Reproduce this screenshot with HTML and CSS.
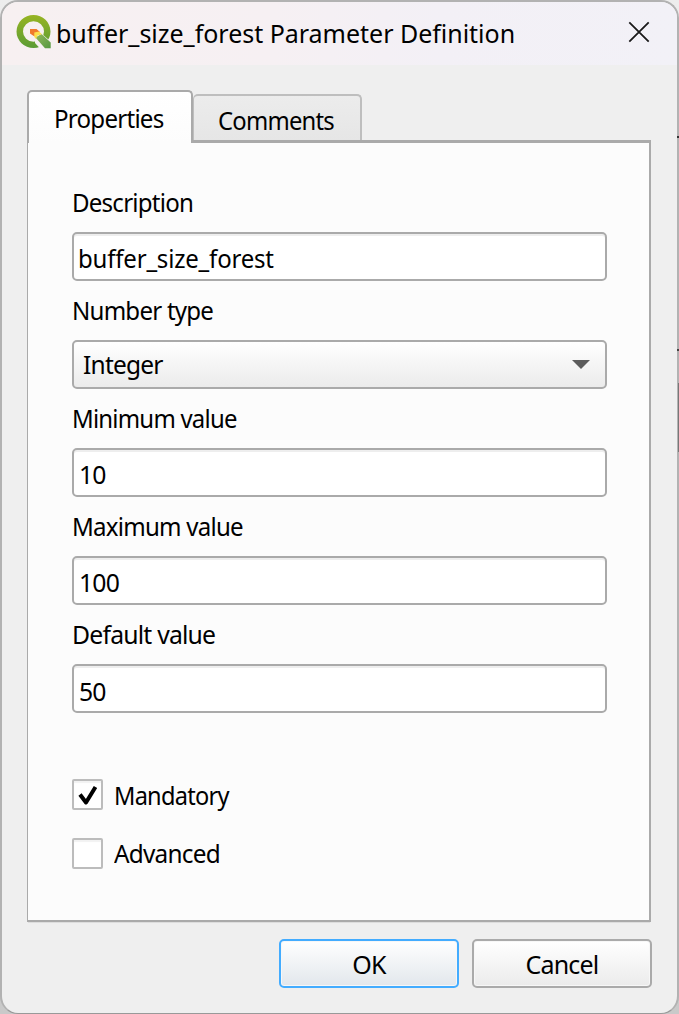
FILE: index.html
```html
<!DOCTYPE html>
<html lang="en">
<head>
<meta charset="utf-8">
<title>buffer_size_forest Parameter Definition</title>
<link rel="stylesheet" href="styles.css">
</head>
<body>
<div class="dialog">
  <header class="titlebar">
    <svg class="logo" width="36" height="35" viewBox="0 0 36 35">
      <defs>
        <linearGradient id="ring" x1="0" y1="0" x2="0" y2="1"><stop offset="0" stop-color="#97b423"/><stop offset="1" stop-color="#5b9c35"/></linearGradient>
        <linearGradient id="tail" x1="0" y1="0" x2="1" y2="1"><stop offset="0" stop-color="#93b85a"/><stop offset="1" stop-color="#559841"/></linearGradient>
      </defs>
      <path fill-rule="evenodd" d="M17.500 0A17 16.500 0 0 1 17.500 33A17 16.500 0 0 1 17.500 0zM17.500 6.200A10.500 10.300 0 0 0 17.500 26.800A10.500 10.300 0 0 0 17.500 6.200z" fill="url(#ring)"/>
      <path d="M19 23L26 19L36 27.500V34H24.500L19 28z" fill="#f7f0f1"/>
      <path d="M19.500 22.500L25.500 19L34.700 27.500V33.200H29z" fill="url(#tail)"/>
      <path d="M14 14H20.500L24 17L20 18.500L18.500 21.500L14 18.500z" fill="#f07a2c"/>
      <path d="M18.300 17.500L23 16.500L26 19.300L21.500 20.500L20 24L18.300 22z" fill="#fbe04b"/>
    </svg>
    <h1 class="title">buffer_size_forest Parameter Definition</h1>
    <svg class="close" width="22" height="22" viewBox="0 0 22 22"><path d="M1.300 1.300L20.700 20.700M20.700 1.300L1.300 20.700" stroke="#1a1a1a" stroke-width="1.800" fill="none"/></svg>
  </header>
  <main class="content">
    <div class="tabs">
      <div class="tab active"><span class="text t-props">Properties</span></div>
      <div class="tab"><span class="text t-comm">Comments</span></div>
    </div>
    <section class="panel">
      <div class="label"><span class="text">Description</span></div>
      <div class="field"><span class="text t-buffer">buffer_size_forest</span></div>
      <div class="label"><span class="text">Number type</span></div>
      <div class="field select"><span class="text t-int">Integer</span><svg class="arrow" width="18" height="9" viewBox="0 0 18 9"><path d="M0 0H18L9 9z" fill="#5c5c5c"/></svg></div>
      <div class="label"><span class="text t-min">Minimum value</span></div>
      <div class="field"><span class="text t-digits">10</span></div>
      <div class="label"><span class="text">Maximum value</span></div>
      <div class="field"><span class="text t-digits">100</span></div>
      <div class="label"><span class="text t-def">Default value</span></div>
      <div class="field last"><span class="text t-digits">50</span></div>
      <div class="check first"><span class="box"><svg width="20" height="21" viewBox="0 0 20 21"><path d="M2 9.500L8 17.500L17.500 2" stroke="#000" stroke-width="4" fill="none" stroke-linejoin="round"/></svg></span><span class="text t-mand">Mandatory</span></div>
      <div class="check"><span class="box"></span><span class="text t-adv">Advanced</span></div>
    </section>
    <footer class="buttons">
      <div class="button primary">OK</div>
      <div class="button">Cancel</div>
    </footer>
  </main>
</div>
</body>
</html>
```
FILE: styles.css
```css
* { box-sizing: border-box; }
body {
  position: relative;
  margin: 0;
  height: 1014px;
  overflow: hidden;
  background: linear-gradient(#ededed, #c9c9c9);
  font: 25px/34px "Noto Sans", "Open Sans", sans-serif;
  letter-spacing: -0.8px;
  color: #000;
  white-space: nowrap;
}
/* Window content behind the dialog, showing through its right edge */
body::after {
  content: "";
  position: absolute;
  top: 0;
  right: 0;
  width: 2px;
  height: 1014px;
  background:
    linear-gradient(#333, #333) 0 136px / 2px 2px no-repeat,
    linear-gradient(#444, #444) 0 349px / 2px 2px no-repeat,
    linear-gradient(#777, #777) 1px 383px / 1px 69px no-repeat;
}
.dialog {
  height: 1014px;
  border: 2px solid #b2b2b2;
  border-bottom: 1px solid #999;
  border-radius: 18px;
  background: #efefef;
  overflow: hidden;
}
.titlebar {
  height: 63px;
  display: flex;
  align-items: flex-start;
  padding: 13px 27px 0 14px;
  background: linear-gradient(90deg, #f7f0f1 0%, #f6f0f3 40%, #f3f0f6 65%, #f2f1f7 100%);
}
.logo { flex: none; }
.title {
  flex: 1;
  margin: 1px 0 0 4px;
  font-size: 25px;
  font-weight: 400;
  line-height: 34px;
  letter-spacing: -0.02px;
}
.close { margin-top: 6px; }
.content { padding: 25px 26px 0 25px; }
.tabs { display: flex; align-items: flex-end; height: 50px; }
.tab {
  width: 169px;
  height: 46px;
  border: 2px solid #bebebe;
  border-bottom: 0;
  border-left-width: 1px;
  border-radius: 5px 5px 0 0;
  background: linear-gradient(#ececec, #e6e6e6);
  padding: 7px 0 0 24px;
}
.tab.active {
  position: relative;
  width: 166px;
  height: 53px;
  margin-bottom: -3px;
  border-color: #aaa;
  border-left-width: 2px;
  background: linear-gradient(#fff, #fcfcfc);
  padding: 9px 0 0 25px;
}
.panel {
  height: 782px;
  border: 2px solid #aaa;
  border-top-width: 3px;
  border-left-width: 1px;
  background: #fcfcfc;
  box-shadow: 0 2px 0 -1px #ddd;
  padding: 35px 42px 0 44px;
}
/* Condensed UI lettering */
.text {
  display: inline-block;
  transform: scaleX(0.963);
  transform-origin: 0 50%;
}
.t-props { transform: scaleX(0.965); }
.t-comm { transform: scaleX(0.952); }
.t-buffer { transform: scaleX(0.96); letter-spacing: -0.2px; }
.t-int { transform: scaleX(0.98); }
.t-digits { transform: scaleX(0.99); margin-left: 1px; }
.t-min { transform: scaleX(0.957); }
.t-def { transform: scaleX(0.99); }
.t-mand { transform: scaleX(0.943); }
.t-adv { transform: scaleX(0.975); }
.label { height: 54px; padding-top: 7px; }
.field {
  height: 49px;
  margin-bottom: 5px;
  border: 2px solid #aaa;
  border-radius: 5px;
  background: #fff;
  box-shadow: inset 0 2px 0 #eee;
  padding: 7px 0 0 4px;
}
.field.last { padding-top: 8px; }
.field.select {
  display: flex;
  justify-content: space-between;
  background: linear-gradient(#fff, #ebebeb);
  box-shadow: none;
  padding: 5px 15px 0 9px;
}
.arrow { margin-top: 13px; }
.check { display: flex; height: 31px; gap: 11px; margin-top: 28px; }
.check .text { margin-top: -2px; }
.check.first { margin-top: 66px; }
.check.first .text { margin-top: -1px; }
.box {
  width: 31px;
  height: 31px;
  border: 2px solid #bcbcbc;
  border-radius: 2px;
  background: #fff;
  box-shadow: inset 0 2px 1px #f2f2f2;
  display: grid;
  place-items: center;
}
.check.first svg { margin-top: 1px; }
.buttons { display: flex; justify-content: flex-end; gap: 13px; margin: 17px -1px 0 0; }
.button {
  width: 180px;
  height: 49px;
  border: 2px solid #aaa;
  border-radius: 5px;
  background: linear-gradient(#fff, #ebebeb);
  box-shadow: inset 0 0 0 1px #f7f7f7;
  text-align: center;
  padding: 6px 0 0;
}
.primary { border-color: #43acff; background: linear-gradient(#fff, #e2e7ec); }
```
